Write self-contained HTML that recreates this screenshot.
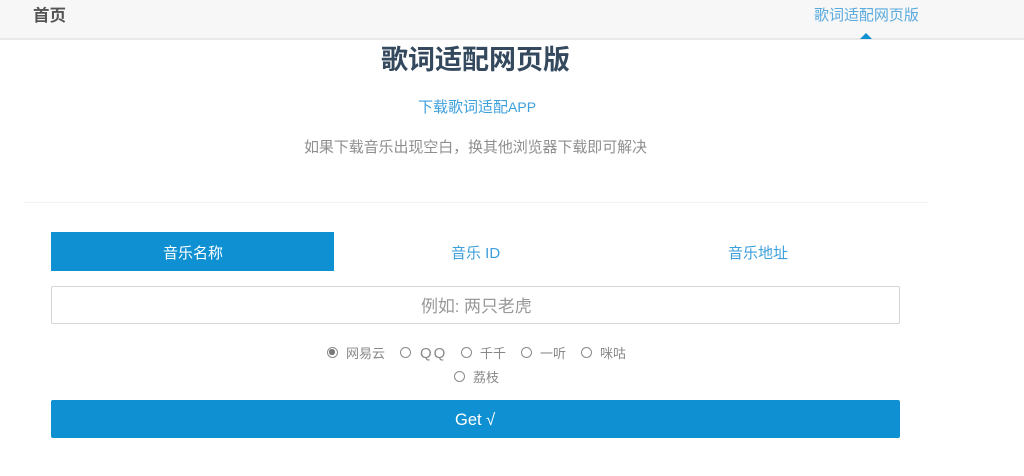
<!DOCTYPE html>
<html><head><meta charset="utf-8">
<style>
html,body{margin:0;padding:0;background:#fff;width:1024px;height:476px;overflow:hidden}
body{position:relative;font-family:"Liberation Sans","Noto Sans CJK SC",sans-serif;}
.a{position:absolute;white-space:nowrap;line-height:1;filter:blur(.25px)}
.nav{position:absolute;left:0;top:0;width:1024px;height:38px;background:#f7f7f7;border-bottom:2px solid #e9e9e9}
.r{position:absolute;width:11px;height:11px;box-sizing:border-box;border:1.5px solid #8a8a8a;border-radius:50%;background:#fff}
.r.on::after{content:"";position:absolute;left:1.25px;top:1.25px;width:5.5px;height:5.5px;border-radius:50%;background:#777}
</style></head><body>
<div class="nav"></div>
<div class="a" style="left:33px;top:8px;font-size:16.5px;font-weight:bold;color:#555">首页</div>
<div class="a" style="left:814px;top:8px;font-size:15px;color:#5aaade;letter-spacing:-.03px">歌词适配网页版</div>
<div style="position:absolute;left:860px;top:33px;width:0;height:0;border-left:6px solid transparent;border-right:6px solid transparent;border-bottom:6px solid #0e90d2"></div>

<div class="a" style="left:381px;top:47px;font-size:27px;font-weight:bold;color:#34495e">歌词适配网页版</div>
<div class="a" style="left:418px;top:100px;font-size:15px;color:#3d9fdc">下载歌词适配<span style="font-size:14px">APP</span></div>
<div class="a" style="left:304px;top:140px;font-size:15px;letter-spacing:-.09px;color:#8f8f8f">如果下载音乐出现空白，换其他浏览器下载即可解决</div>

<div style="position:absolute;left:23px;top:202px;width:905px;height:1px;background:#f3f3f3"></div>

<div style="position:absolute;left:51px;top:232px;width:283px;height:39px;background:#0e90d2"></div>
<div class="a" style="left:163px;top:246px;font-size:15px;color:#fff">音乐名称</div>
<div class="a" style="left:451px;top:246px;font-size:15px;color:#3d9fdc">音乐 ID</div>
<div class="a" style="left:728px;top:246px;font-size:15px;color:#3d9fdc">音乐地址</div>

<div style="position:absolute;left:51px;top:286px;width:849px;height:38px;box-sizing:border-box;border:1px solid #d6d6d6;border-radius:2px;background:#fff"></div>
<div class="a" style="left:421px;top:298px;font-size:17px;color:#999;letter-spacing:-.1px">例如: 两只老虎</div>

<span class="r on" style="left:327px;top:347px"></span>
<div class="a" style="left:346px;top:347px;font-size:13px;color:#888">网易云</div>
<span class="r" style="left:400px;top:347px"></span>
<div class="a" style="left:420px;top:346px;font-size:15px;color:#888;letter-spacing:2px">QQ</div>
<span class="r" style="left:461px;top:347px"></span>
<div class="a" style="left:480px;top:347px;font-size:13px;color:#888">千千</div>
<span class="r" style="left:521px;top:347px"></span>
<div class="a" style="left:540px;top:347px;font-size:13px;color:#888">一听</div>
<span class="r" style="left:581px;top:347px"></span>
<div class="a" style="left:600px;top:347px;font-size:13px;color:#888">咪咕</div>
<span class="r" style="left:454px;top:371px"></span>
<div class="a" style="left:473px;top:371px;font-size:13px;color:#888">荔枝</div>

<div style="position:absolute;left:51px;top:400px;width:849px;height:38px;background:#0e90d2;border-radius:2px"></div>
<div class="a" style="left:455px;top:412px;font-size:16.5px;color:#fff">Get √</div>
</body></html>
